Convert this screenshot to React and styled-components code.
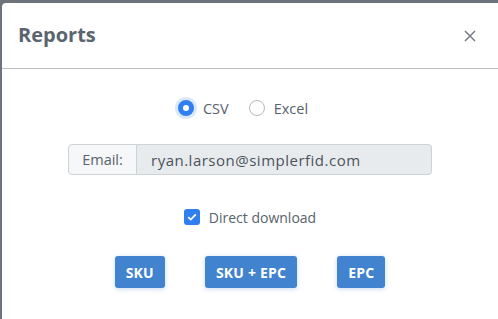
import React from 'react'
import styled, { createGlobalStyle, css } from 'styled-components'

const GlobalStyle = createGlobalStyle`
  html, body {
    margin: 0;
    padding: 0;
    background: #6c737b;
    height: 100%;
    overflow: hidden;
  }
  body {
    font-family: "Open Sans", "Noto Sans", sans-serif;
  }
`

const Modal = styled.div`
  margin: 3px 0 0 2px;
  width: 496px;
  height: 316px;
  background: #ffffff;
  border-radius: 4px 0 0 0;
  display: flex;
  flex-direction: column;
`

const Header = styled.div`
  height: 65px;
  padding: 0 16px;
  display: flex;
  align-items: center;
  justify-content: space-between;
  border-bottom: 1px solid #b9bfc5;
`

const Title = styled.h5`
  margin: 0 0 2px;
  font-size: 20px;
  font-weight: 700;
  color: #5b6570;
`

const Close = styled.button`
  border: none;
  background: none;
  padding: 0;
  margin-right: 4px;
  width: 16px;
  height: 16px;
  display: flex;
  align-items: center;
  justify-content: center;
`

const Body = styled.div`
  display: flex;
  flex-direction: column;
  align-items: center;
  padding-top: 27px;
`

const RadioRow = styled.div`
  display: flex;
  align-items: center;
  height: 24px;
  gap: 20px;
  margin-right: 14px;
`

const Option = styled.label`
  display: flex;
  align-items: center;
  gap: 9px;
  font-size: 14.5px;
  color: #58626c;
`

const Radio = styled.span`
  width: 16px;
  height: 16px;
  border-radius: 50%;
  box-sizing: border-box;
  border: 1px solid #b3b9bf;
  background: #fff;

  ${({ checked }) => checked && css`
    border: none;
    background: #2f7ff0;
    box-shadow: 0 0 0 3px rgba(47, 127, 240, 0.18);
    display: flex;
    align-items: center;
    justify-content: center;
    &::after {
      content: '';
      width: 6px;
      height: 6px;
      border-radius: 50%;
      background: #fff;
    }
  `}
`

const InputGroup = styled.div`
  margin-top: 24px;
  width: 364px;
  height: 31px;
  display: flex;
  font-size: 14.5px;
`

const Addon = styled.span`
  width: 69px;
  box-sizing: border-box;
  display: flex;
  align-items: center;
  justify-content: center;
  background: #f6f7f9;
  border: 1px solid #cdd2d7;
  border-radius: 4px 0 0 4px;
  color: #58626c;
`

const Field = styled.div`
  flex: 1;
  display: flex;
  align-items: center;
  padding-left: 14px;
  background: #e8ebee;
  border: 1px solid #cdd2d7;
  border-left: none;
  border-radius: 0 4px 4px 0;
  color: #4a535c;
  font-size: 15px;
  letter-spacing: 0.5px;
`

const CheckRow = styled.label`
  margin-top: 30px;
  height: 24px;
  display: flex;
  align-items: center;
  gap: 9px;
  font-size: 14px;
  color: #58626c;
`

const Box = styled.span`
  width: 16px;
  height: 16px;
  border-radius: 3px;
  background: #2f7ff0;
  display: flex;
  align-items: center;
  justify-content: center;
`

const Buttons = styled.div`
  margin-top: 27px;
  display: flex;
  gap: 40px;
`

const Button = styled.button`
  height: 32px;
  padding: 0 11px;
  border: none;
  border-radius: 3px;
  background: #4183cf;
  color: #fff;
  font-family: "Open Sans", "Noto Sans", sans-serif;
  font-size: 14px;
  font-weight: 700;
  letter-spacing: 0.2px;
  box-shadow: 0 1px 5px rgba(65, 131, 207, 0.3);
`

export default function App() {
  return (
    <>
      <GlobalStyle />
      <Modal>
        <Header>
          <Title>Reports</Title>
          <Close aria-label="Close">
            <svg width="12" height="12" viewBox="0 0 12 12">
              <path d="M1 1 L11 11 M11 1 L1 11" stroke="#7a8088" strokeWidth="1.6" />
            </svg>
          </Close>
        </Header>
        <Body>
          <RadioRow>
            <Option><Radio checked />CSV</Option>
            <Option><Radio />Excel</Option>
          </RadioRow>
          <InputGroup>
            <Addon>Email:</Addon>
            <Field>ryan.larson@simplerfid.com</Field>
          </InputGroup>
          <CheckRow>
            <Box>
              <svg width="10" height="8" viewBox="0 0 10 8">
                <path d="M1.2 4.2 L3.8 6.6 L8.8 1.4" fill="none" stroke="#fff" strokeWidth="1.8" />
              </svg>
            </Box>
            Direct download
          </CheckRow>
          <Buttons>
            <Button>SKU</Button>
            <Button>SKU + EPC</Button>
            <Button>EPC</Button>
          </Buttons>
        </Body>
      </Modal>
    </>
  )
}
